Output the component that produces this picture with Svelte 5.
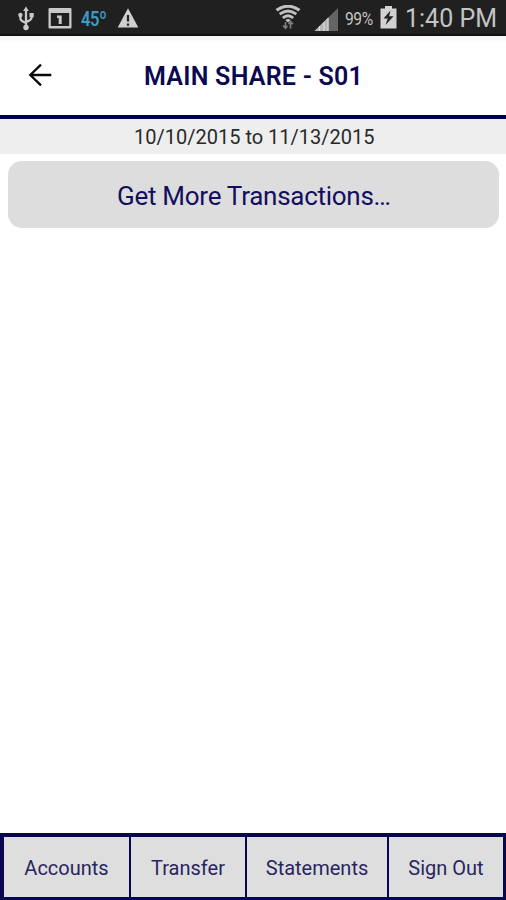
<script>
  const tabs = [
    { label: 'Accounts', width: 125 },
    { label: 'Transfer', width: 114 },
    { label: 'Statements', width: 140 },
    { label: 'Sign Out', width: 114 }
  ];
</script>

<div class="screen">
  <div class="status">
    <svg class="usb" width="18" height="26" viewBox="0 0 18 26" fill="none" stroke="#c9c9c9" stroke-width="2.300">
      <path d="M9 4v16M3.400 9v3.500q0 2.300 5.600 4.500M14.600 9v2.500Q14.600 14 9 16" />
      <path d="M9 .5l2.800 4.500H6.200z" fill="#c9c9c9" stroke="none" />
      <circle cx="9" cy="21.500" r="2.700" fill="#c9c9c9" stroke="none" />
      <circle cx="3.400" cy="9" r="2.200" fill="#c9c9c9" stroke="none" />
      <path d="M12.500 7h4.200v4.200h-4.200z" fill="#c9c9c9" stroke="none" />
    </svg>
    <svg class="calendar" width="24" height="22" viewBox="0 0 24 22">
      <path fill="#c9c9c9" fill-rule="evenodd" d="M1.500 0h21q1 0 1 1v18.500q0 1-1 1h-21q-1 0-1-1V1q0-1 1-1zM2.800 5v13h18.400V5z" />
      <path d="M9 7.500h4.700V16H10.700v-6H9z" fill="#c9c9c9" />
    </svg>
    <span class="temp">45º</span>
    <svg class="warning" width="22" height="21" viewBox="0 0 22 21">
      <path d="M11 .3L21.300 19.600H.7z" fill="#d0d0d0" />
      <path d="M11 7v6.500M11 15.500v2.300" stroke="#242424" stroke-width="2.300" />
    </svg>
    <svg class="wifi" width="26" height="26" viewBox="0 0 26 26" fill="none" stroke="#c2c2c2">
      <path d="M1.500 5.300Q13-3 24.500 5.300" stroke-width="3" />
      <path d="M4.700 9.200Q13 2.700 21.300 9.200" stroke-width="2.800" />
      <path d="M7.800 13Q13 8.500 18.200 13" stroke-width="2.800" />
      <path d="M10.400 15Q13 12.900 15.600 15L13 17.500z" fill="#c2c2c2" stroke="none" />
      <path d="M10.500 17v6M8 20.500l2.500 2.800 2-2.300M15.500 23.500v-6.500M13.500 19l2-2.500 2.500 2.800" stroke="#7d7d7d" stroke-width="1.700" />
    </svg>
    <svg class="signal" width="25" height="24" viewBox="0 0 25 24">
      <path d="M24 0v23H.5z" fill="#646464" />
      <path d="M14.500 9.300V23H.5z" fill="#b5b5b5" />
      <path d="M5.500 18v5M10 14v9M14 10v13" stroke="#e0e0e0" />
    </svg>
    <span class="percent">99%</span>
    <svg class="battery" width="17" height="23" viewBox="0 0 17 23">
      <path d="M5 0h7v2.500h4.500V22.500H.5V2.500H5z" fill="#d2d2d2" />
      <path d="M10.500 4.500L3.500 12.500h4.200L5.500 19l8-8.800H9.200z" fill="#222" />
    </svg>
    <span class="time">1:40 PM</span>
  </div>

  <header>
    <svg class="back" width="24" height="24" viewBox="0 0 24 24" fill="none" stroke="#090909" stroke-width="2.300">
      <path d="M23.300 12H2.500M13 1.700L2.300 12 13 22.300" />
    </svg>
    <h1>MAIN SHARE - S01</h1>
  </header>

  <div class="period"><span>10/10/2015 to 11/13/2015</span></div>

  <main>
    <button class="more"><span>Get More Transactions…</span></button>
  </main>

  <nav>
    {#each tabs as tab}
      <button style="width: {tab.width}px">{tab.label}</button>
    {/each}
  </nav>
</div>

<style>
  .screen {
    width: 506px;
    height: 900px;
    display: flex;
    flex-direction: column;
    overflow: hidden;
    background: #fff;
    font-family: Roboto, "Liberation Sans", sans-serif;
  }
  .screen * { box-sizing: border-box; }
  svg { display: block; flex: none; }
  button { border: 0; padding: 0; font-family: inherit; white-space: nowrap; }
  .status {
    height: 36px;
    flex: none;
    display: flex;
    align-items: flex-start;
    background: #202020;
    border-bottom: 2px solid #111;
    color: #c4c4c4;
    white-space: nowrap;
  }
  .usb { margin: 6px 0 0 17px; }
  .calendar { margin: 8px 0 0 13px; }
  .temp {
    width: 26px;
    margin: 7px 0 0 9px;
    font-size: 21px;
    line-height: 24px;
    font-weight: 600;
    color: #3d9cc4;
    transform: scaleX(0.79);
    transform-origin: left;
    letter-spacing: -0.5px;
  }
  .warning { margin: 8px 0 0 10px; }
  .wifi { margin: 5px 0 0 136px; }
  .signal { margin: 8px 0 0 13px; }
  .percent {
    width: 32px;
    margin: 8px 0 0 6px;
    font-size: 18px;
    line-height: 22px;
    letter-spacing: -0.5px;
    transform: scaleX(0.87);
    transform-origin: left;
  }
  .battery { margin: 6px 0 0 3px; }
  .time { margin: 4px 0 0 8px; font-size: 25px; line-height: 30px; }
  header {
    height: 83px;
    flex: none;
    display: flex;
    align-items: flex-start;
    border-bottom: 4px solid #02004b;
    background: linear-gradient(#f4f4f4, #fff 7px);
  }
  .back { margin: 27px 0 0 28px; }
  h1 {
    margin: 25px 0 0 92px;
    font-size: 25px;
    line-height: 31px;
    font-weight: 600;
    letter-spacing: 0.25px;
    color: #0b0850;
    white-space: nowrap;
  }
  .period {
    height: 35px;
    flex: none;
    padding: 6px 0 0 134px;
    background: #eee;
    color: #292929;
    font-size: 20px;
    line-height: 24px;
    white-space: nowrap;
  }
  main { flex: 1; padding: 7px 7px 0 8px; }
  .more {
    display: block;
    width: 491px;
    height: 67px;
    border-radius: 14px;
    background: #ddd;
    color: #130e60;
    font-size: 26px;
    letter-spacing: -0.27px;
    padding: 2px 0 0 109px;
    text-align: left;
  }
  nav {
    height: 67px;
    flex: none;
    display: flex;
    gap: 2px;
    padding: 4px 3px 3px 4px;
    background: #08064f;
  }
  nav button { background: #dedede; color: #29255f; font-size: 20px; padding-top: 1px; }
</style>
